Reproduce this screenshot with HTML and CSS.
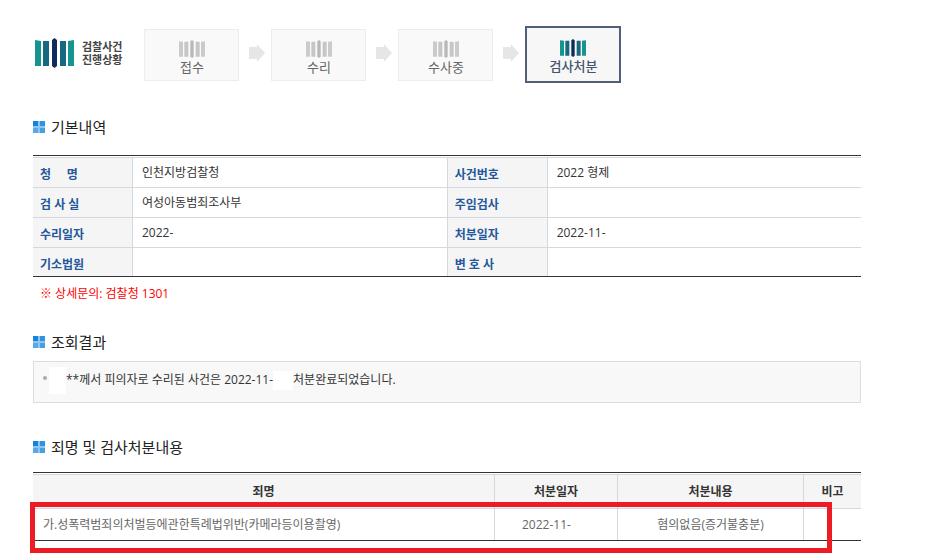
FILE: index.html
```
<!DOCTYPE html>
<html lang="ko">
<head>
<meta charset="utf-8">
<title>검찰사건 진행상황</title>
<link rel="stylesheet" href="styles.css">
</head>
<body>
<svg class="defs" aria-hidden="true">
  <symbol id="bars" viewBox="0 0 39 30" preserveAspectRatio="none">
    <path class="outer" d="M0 2l6 1v25H0zM39 2l-6 1v25h6z"/>
    <path class="inner" d="M8 3h6v25H8zM25 3h6v25h-6z"/>
    <path class="center" d="M17 2l2.5-2L22 2v26l-2.5 2L17 28z"/>
  </symbol>
  <symbol id="arrow" viewBox="0 0 16 18">
    <path d="M0 3h8V0l8 9-8 9v-3H0z"/>
  </symbol>
  <symbol id="tiles" viewBox="0 0 12 12">
    <path fill="#8fc6f1" d="M0 0h12v12H0z"/>
    <path fill="#1583d8" d="M0 0h5v5H0z"/>
    <path fill="#2f94e0" d="M7 0h5v5H7z"/>
    <path fill="#58a9e6" d="M0 7h5v5H0z"/>
    <path fill="#459fe3" d="M7 7h5v5H7z"/>
  </symbol>
</svg>
<main class="page">
  <header class="progress">
    <div class="brand">
      <svg class="brand-mark"><use href="#bars"/></svg>
      <h1 class="brand-name">검찰사건<br>진행상황</h1>
    </div>
    <ol class="steps">
      <li class="step"><svg class="step-mark"><use href="#bars"/></svg>접수</li>
      <li class="arrow"><svg><use href="#arrow"/></svg></li>
      <li class="step"><svg class="step-mark"><use href="#bars"/></svg>수리</li>
      <li class="arrow"><svg><use href="#arrow"/></svg></li>
      <li class="step"><svg class="step-mark"><use href="#bars"/></svg>수사중</li>
      <li class="arrow"><svg><use href="#arrow"/></svg></li>
      <li class="step current" aria-current="step"><svg class="step-mark"><use href="#bars"/></svg>검사처분</li>
    </ol>
  </header>

  <section class="basic">
    <h2><svg><use href="#tiles"/></svg>기본내역</h2>
    <table class="info">
      <colgroup><col class="label"><col class="wide"><col class="label-mid"><col></colgroup>
      <tbody>
        <tr><th scope="row">청 &nbsp; &nbsp; 명</th><td>인천지방검찰청</td><th scope="row">사건번호</th><td>2022 형제</td></tr>
        <tr><th scope="row">검 사 실</th><td>여성아동범죄조사부</td><th scope="row">주임검사</th><td></td></tr>
        <tr><th scope="row">수리일자</th><td>2022-</td><th scope="row">처분일자</th><td>2022-11-</td></tr>
        <tr><th scope="row">기소법원</th><td></td><th scope="row">변 호 사</th><td></td></tr>
      </tbody>
    </table>
    <p class="note">※ 상세문의: 검찰청 1301</p>
  </section>

  <section class="result">
    <h2><svg><use href="#tiles"/></svg>조회결과</h2>
    <p class="message"><span class="dot"></span><span class="mask name"></span>**께서 피의자로 수리된 사건은 2022-11-<span class="mask date"></span>처분완료되었습니다.</p>
  </section>

  <section class="charges">
    <h2><svg><use href="#tiles"/></svg>죄명 및 검사처분내용</h2>
    <div class="marked">
      <table class="list">
        <colgroup><col><col class="day"><col class="outcome"><col class="remark"></colgroup>
        <thead>
          <tr><th scope="col">죄명</th><th scope="col">처분일자</th><th scope="col">처분내용</th><th scope="col">비고</th></tr>
        </thead>
        <tbody>
          <tr><td class="charge">가.성폭력범죄의처벌등에관한특례법위반(카메라등이용촬영)</td><td class="decided">2022-11-</td><td>혐의없음(증거불충분)</td><td></td></tr>
        </tbody>
      </table>
      <div class="highlight"></div>
    </div>
  </section>
</main>
</body>
</html>
```
FILE: styles.css
```
* {
  box-sizing: border-box;
}

body {
  margin: 0;
  background: #fff;
  color: #333;
  font: 12px/20px "Open Sans", "Noto Sans CJK KR", sans-serif;
}

h1, h2, p, ol {
  margin: 0;
  padding: 0;
}

.defs {
  position: absolute;
  width: 0;
  height: 0;
}

.page {
  padding: 26px 72px 18px 33px;
}

.progress {
  display: flex;
  align-items: center;
  gap: 22px;
  margin-bottom: 34px;
}

.brand {
  display: flex;
  align-items: center;
  gap: 8px;
  padding: 0 0 3px 2px;
}

.brand-mark {
  width: 39px;
  height: 30px;
}

.brand-name {
  color: #444;
  font-size: 11px;
  line-height: 13px;
  white-space: nowrap;
}

.outer { fill: var(--outer, #16948f); }
.inner { fill: var(--inner, #17697f); }
.center { fill: var(--center, #102a5c); }

.steps {
  display: flex;
  align-items: center;
  list-style: none;
}

.step {
  --outer: #cbcbcb;
  --inner: #c6c6c6;
  --center: #b8b8b8;
  display: flex;
  flex-direction: column;
  align-items: center;
  width: 95px;
  height: 52px;
  padding-top: 10px;
  border: 1px solid #ededed;
  background: #f9f9f9;
  color: #666;
  font-size: 13px;
  line-height: 18px;
}

.step-mark {
  width: 26px;
  height: 18px;
}

.step.current {
  --outer: #16948f;
  --inner: #17697f;
  --center: #102a5c;
  width: 96px;
  height: 57px;
  padding-top: 11px;
  border: 2px solid #4f6078;
  background: #f7f7f7;
  color: #44546c;
  font-weight: 500;
}

.arrow {
  display: flex;
  justify-content: center;
  width: 32px;
  padding-left: 3px;
}

.arrow svg {
  width: 16px;
  height: 18px;
  margin-bottom: 4px;
  fill: #e6e6e6;
}

h2 {
  display: flex;
  align-items: center;
  gap: 6px;
  color: #222;
  font-size: 15px;
  font-weight: 400;
  line-height: 20px;
}

h2 svg {
  width: 12px;
  height: 12px;
}

table {
  width: 100%;
  padding-top: 1px;
  border-top: 1px solid #333;
  border-bottom: 1px solid #333;
  border-collapse: separate;
  border-spacing: 0;
  table-layout: fixed;
}

th, td {
  padding: 0;
  border-top: 1px solid #d5d8de;
  text-align: left;
}

th {
  background: #f5f5f5;
}

th + td, td + th, td + td, th + th {
  border-left: 1px solid #d5d8de;
}

.basic h2 { margin-bottom: 18px; }
.label { width: 99px; }
.label-mid { width: 100px; }
.wide { width: 38%; }

.info th, .info td {
  height: 30px;
}

.info tr:last-child > * {
  height: 29px;
}

.info th {
  padding: 5px 0 0 7px;
  color: #24579b;
}

.info td {
  padding-left: 9px;
}

.note {
  padding: 7px 7px 0;
  color: #f00;
}

.result {
  margin: 28px 0 34px;
}

.result h2 { margin-bottom: 9px; }

.message {
  display: flex;
  align-items: center;
  height: 42px;
  padding: 0 9px 4px;
  border: 1px solid #ddd;
  background: #f8f8f8;
}

.dot {
  width: 4px;
  height: 4px;
  margin: 0 2px 4px 0;
  border-radius: 50%;
  background: #aaa;
}

.mask {
  background: #fff;
}

.mask.name {
  width: 17px;
  height: 27px;
}

.mask.date {
  width: 20px;
  height: 19px;
}

.charges h2 { margin-bottom: 15px; }

.marked {
  position: relative;
}

.day { width: 123px; }
.outcome { width: 186px; }
.remark { width: 58px; }

.list th {
  height: 34px;
  color: #333;
  text-align: center;
}

.list td {
  height: 32px;
  color: #666;
  text-align: center;
}

.list .charge {
  padding-left: 10px;
  text-align: left;
}

.list .decided {
  padding-left: 27px;
  text-align: left;
}

.highlight {
  position: absolute;
  inset: 30px 29px -12px -3px;
  border: 5px solid #ed1c24;
}
```
